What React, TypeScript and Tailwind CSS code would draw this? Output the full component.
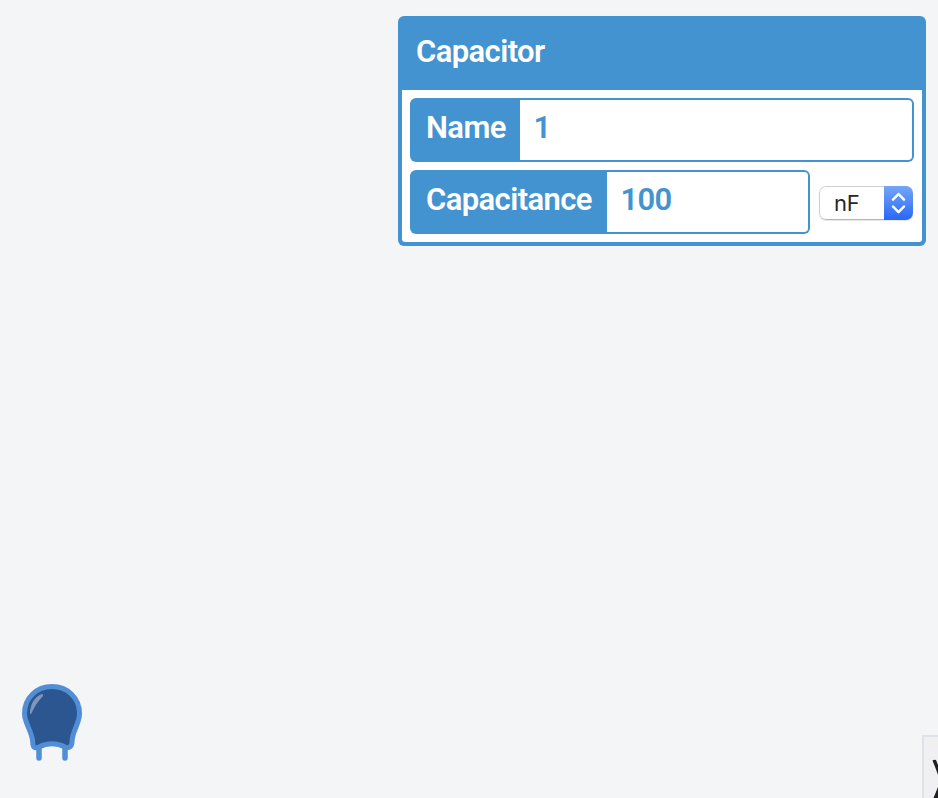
import React from 'react';

type FieldProps = { label: string; value: string; labelClass: string; className: string };

function Field({ label, value, labelClass, className }: FieldProps) {
  return (
    <div className={`flex h-16 overflow-hidden rounded-md bg-[#4393d1] p-0.5 ${className}`}>
      <label className={`shrink-0 pl-3.5 pt-[5px] text-white ${labelClass}`}>{label}</label>
      <div className="grow rounded-r-[4px] bg-white pl-[13.5px] pt-[5px] tracking-[-0.7px] text-[#4393d1]">{value}</div>
    </div>
  );
}

function UnitSelect() {
  return (
    <button className="mt-4 flex h-[34px] w-[94px] shrink-0 overflow-hidden rounded-[7px] bg-white shadow-[0_1px_1px_rgba(0,0,0,0.1)]">
      <span className="h-[34px] w-[65px] shrink-0 rounded-l-[7px] border border-r-0 border-[#cfcfcf] border-b-[#b5b5b5] pl-3.5 text-left font-['Inter',sans-serif] text-[22px] leading-8 font-normal tracking-[-0.3px] text-[#262626]">nF</span>
      <span className="h-[34px] w-[29px] shrink-0 bg-linear-to-b from-[#75a5f7] to-[#2866f6]">
        <svg width="29" height="34" viewBox="0 0 29 34" fill="none" stroke="white" strokeWidth="2.5" strokeLinecap="round" strokeLinejoin="round">
          <path d="M9 13.7 14.5 8l5.5 5.7M9 20.5l5.5 5.7 5.5-5.7" />
        </svg>
      </span>
    </button>
  );
}

function CapacitorIcon() {
  return (
    <svg width="64" height="80" viewBox="0 0 64 80" fill="none">
      <path d="M19 64v12M45 64v12" stroke="#528ed5" strokeWidth="5.5" strokeLinecap="round" />
      <path d="M32 4.5C16.5 4.5 4.5 16 4.5 31.500C4.500 42 12.500 49 12.800 61C12.800 66 16 66.500 19 65C27 60.500 37 60.500 45 65C49 67 52 64 52 60C52 49 59.500 42 59.500 31.500C59.500 16 47.500 4.500 32 4.500Z" fill="#2b568f" stroke="#528ed5" strokeWidth="5" strokeLinejoin="round" />
      <path d="M22.500 12.500C16 14 10.500 21 10.500 32C13 28 14 23 22.500 14Z" fill="#8098bb" stroke="#8098bb" strokeWidth="1" strokeLinejoin="round" />
    </svg>
  );
}

export default function App() {
  return (
    <main className="flex h-[798px] w-[938px] flex-col justify-between overflow-hidden bg-[#f3f5f7] font-['Roboto',sans-serif] text-[31px] leading-[46px] font-semibold tracking-[-0.6px]">
      <section className="mt-4 mr-3 h-[230px] w-[528px] self-end rounded-md bg-[#4393d1] p-1">
        <h1 className="h-[70px] pl-3.5 pt-[9px] text-white">Capacitor</h1>
        <div className="flex flex-col gap-2 rounded-b-[3px] bg-white p-2">
          <Field label="Name" value="1" labelClass="w-[108px]" className="w-full" />
          <div className="flex gap-[9px]">
            <Field label="Capacitance" value="100" labelClass="w-[195px]" className="w-[400px]" />
            <UnitSelect />
          </div>
        </div>
      </section>
      <footer className="flex items-end justify-between pl-5">
        <div className="mb-9 h-20"><CapacitorIcon /></div>
        <div className="h-[63px] w-4 overflow-hidden border-t-2 border-l-2 border-[#dfe2e9] bg-[#f0f0f2]">
          <svg width="14" height="61" viewBox="0 0 14 61" fill="#202020">
            <path d="M8.500 23.500Q10 22.500 12 23L14 28V38L11.500 31ZM14 50V61H9.500Z" />
          </svg>
        </div>
      </footer>
    </main>
  );
}
